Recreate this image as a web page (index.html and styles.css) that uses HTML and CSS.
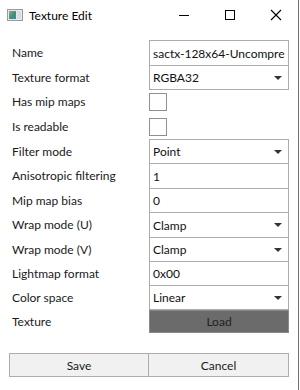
FILE: index.html
```html
<!DOCTYPE html>
<html lang="en">

<head>
    <meta charset="UTF-8">
    <meta name="viewport" content="width=device-width, initial-scale=1.0">
    <title>Texture Edit</title>
    <link rel="stylesheet" href="styles.css">
</head>

<body>
    <div class="window">
        <div class="titlebar">
            <svg class="app-icon" width="16" height="12" viewBox="0 0 16 12">
                <defs>
                    <linearGradient id="g" x1="0" y1="0" x2="1" y2="1">
                        <stop offset="0" stop-color="#6fb3a0"/>
                        <stop offset="0.6" stop-color="#3d8f6e"/>
                        <stop offset="1" stop-color="#5b7fb8"/>
                    </linearGradient>
                </defs>
                <rect x="0.5" y="0.5" width="15" height="11" fill="#e8e8e8" stroke="#9a9a9a"/>
                <rect x="2" y="2" width="7" height="8" fill="url(#g)"/>
                <rect x="10" y="2" width="4" height="8" fill="#d8dde2"/>
            </svg>
            <span class="title">Texture Edit</span>
            <div class="controls">
                <svg width="46" height="30" viewBox="0 0 46 30"><path d="M18 15.5h10" stroke="#000" stroke-width="1"/></svg>
                <svg width="46" height="30" viewBox="0 0 46 30"><rect x="18.5" y="10.5" width="9" height="9" fill="none" stroke="#000"/></svg>
                <svg width="46" height="30" viewBox="0 0 46 30"><path d="M18 10l10 10M28 10l-10 10" stroke="#000" stroke-width="1.1"/></svg>
            </div>
        </div>

        <div class="form">
            <label>Name</label>
            <div class="field">sactx-128x64-Uncompre</div>

            <label>Texture format</label>
            <div class="field select">RGBA32<span class="arrow"></span></div>

            <label>Has mip maps</label>
            <div class="check-cell"><span class="check"></span></div>

            <label>Is readable</label>
            <div class="check-cell"><span class="check"></span></div>

            <label>Filter mode</label>
            <div class="field select">Point<span class="arrow"></span></div>

            <label>Anisotropic filtering</label>
            <div class="field">1</div>

            <label>Mip map bias</label>
            <div class="field">0</div>

            <label>Wrap mode (U)</label>
            <div class="field select">Clamp<span class="arrow"></span></div>

            <label>Wrap mode (V)</label>
            <div class="field select">Clamp<span class="arrow"></span></div>

            <label>Lightmap format</label>
            <div class="field">0x00</div>

            <label>Color space</label>
            <div class="field select">Linear<span class="arrow"></span></div>

            <label>Texture</label>
            <div class="load">Load</div>
        </div>

        <div class="buttons">
            <button>Save</button>
            <button>Cancel</button>
        </div>
    </div>
</body>

</html>
```

FILE: styles.css
```css
body {
    margin: 0;
    background: #ffffff;
    font-family: Lato, "Noto Sans", sans-serif;
    font-size: 12px;
    color: #000000;
}

.window {
    width: 299px;
    height: 390px;
    border-right: 1px solid #6e6e6e;
    box-sizing: border-box;
}

.titlebar {
    display: flex;
    align-items: center;
    height: 30px;
}

.app-icon {
    margin-left: 7px;
    margin-right: 6px;
}

.title {
    flex: 1;
    font-size: 12px;
}

.controls {
    display: flex;
    margin-right: -1px;
}

.controls svg {
    display: block;
}

.form {
    display: grid;
    grid-template-columns: 140px 140px;
    grid-template-rows: 25px 24px 25px 25px 24px 25px 24px 25px 24px 24px 24px 24px;
    margin: 10px 0 0 9px;
}

.form label {
    display: flex;
    align-items: center;
    padding-left: 3px;
    color: #1a1a1a;
}

.field {
    display: flex;
    align-items: center;
    position: relative;
    height: calc(100% + 1px);
    box-sizing: border-box;
    border: 1px solid #ababab;
    padding-left: 3px;
    background: #ffffff;
    white-space: nowrap;
    overflow: hidden;
    color: #111111;
}

.arrow {
    position: absolute;
    right: 6px;
    top: 10px;
    width: 0;
    height: 0;
    border-left: 4px solid transparent;
    border-right: 4px solid transparent;
    border-top: 4px solid #333333;
}

.check-cell {
    display: flex;
    align-items: center;
    padding-top: 1px;
}

.check {
    display: block;
    width: 18px;
    height: 18px;
    box-sizing: border-box;
    border: 1px solid #8f8f8f;
    background: #ffffff;
}

.load {
    display: flex;
    align-items: center;
    justify-content: center;
    margin-top: 1px;
    box-sizing: border-box;
    border: 1px solid #8a8a8a;
    background: #6b6b6b;
    color: #222222;
}

.buttons {
    display: grid;
    grid-template-columns: 140px 140px;
    margin: 20px 0 0 9px;
}

.buttons button {
    height: 24px;
    border: 1px solid #adadad;
    background: #f1f1f1;
    font-family: Lato, "Noto Sans", sans-serif;
    font-size: 12px;
    color: #1a1a1a;
    margin: 0;
}

.buttons button + button {
    margin-left: -1px;
    width: 141px;
}
```
